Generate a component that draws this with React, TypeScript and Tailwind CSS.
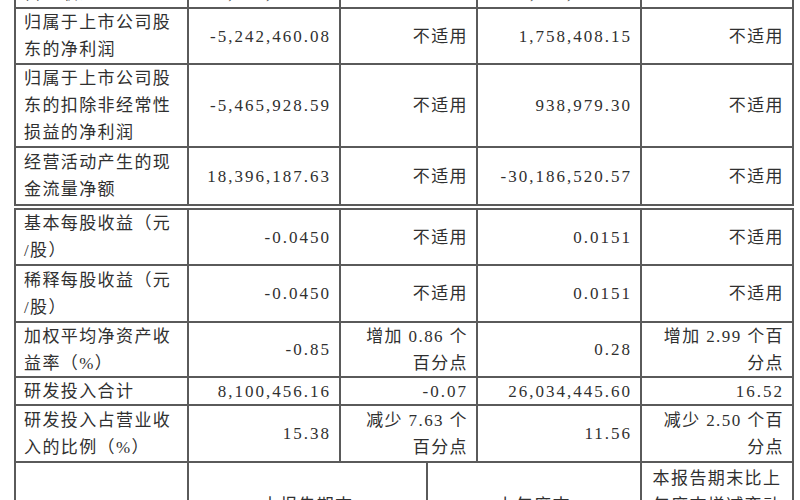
import React from "react";

const B = "border-[#5a5a5a]";

type Cell = string[];

function Row({
  h,
  cells,
  cols,
  align,
}: {
  h: string;
  cells: Cell[];
  cols: string;
  align?: ("l" | "r" | "c")[];
}) {
  return (
    <div className={`grid ${cols} ${h} border-b-2 ${B}`}>
      {cells.map((lines, i) => {
        const a = align ? align[i] : i === 0 ? "l" : "r";
        const cls =
          a === "l"
            ? "justify-start text-left pl-[8px]"
            : a === "c"
            ? "justify-center text-center"
            : "justify-end text-right pr-[8px]";
        return (
          <div
            key={i}
            className={`flex items-center overflow-hidden border-r-2 ${B} ${cls}`}
          >
            <div className="leading-[27px] whitespace-nowrap">
              {lines.map((l, j) => (
                <div
                  key={j}
                  className={/^[-\d.,]+$/.test(l) ? "tracking-[2px]" : "tracking-[1.4px]"}
                >
                  {l}
                </div>
              ))}
            </div>
          </div>
        );
      })}
    </div>
  );
}

const C5 = "grid-cols-[173px_152px_137px_164px_152px]";
const C4 = "grid-cols-[173px_239px_214px_152px]";

export default function App() {
  return (
    <div
      className="w-[800px] h-[500px] overflow-hidden bg-white text-[#303030] text-[17px]"
      style={{ fontFamily: '"Liberation Serif", "Noto Sans CJK SC", serif' }}
    >
      <div className="mt-[-23px]">
        <div className={`ml-[14px] w-[780px] border-l-2 border-t-2 ${B}`}>
          <Row
            h="h-[30px]"
            cols={C5}
            cells={[["营业收入"], ["52,668,765.27"], ["-76.61"], ["225,211,467.52"], ["-31.39"]]}
          />
          <Row
            h="h-[56px]"
            cols={C5}
            cells={[
              ["归属于上市公司股", "东的净利润"],
              ["-5,242,460.08"],
              ["不适用"],
              ["1,758,408.15"],
              ["不适用"],
            ]}
          />
          <Row
            h="h-[83px]"
            cols={C5}
            cells={[
              ["归属于上市公司股", "东的扣除非经常性", "损益的净利润"],
              ["-5,465,928.59"],
              ["不适用"],
              ["938,979.30"],
              ["不适用"],
            ]}
          />
          <Row
            h="h-[58px]"
            cols={C5}
            cells={[
              ["经营活动产生的现", "金流量净额"],
              ["18,396,187.63"],
              ["不适用"],
              ["-30,186,520.57"],
              ["不适用"],
            ]}
          />
        </div>
        <div className={`mt-[2px] ml-[14px] w-[780px] border-l-2 border-t-2 ${B}`}>
          <Row
            h="h-[56px]"
            cols={C5}
            cells={[
              ["基本每股收益（元", "/股）"],
              ["-0.0450"],
              ["不适用"],
              ["0.0151"],
              ["不适用"],
            ]}
          />
          <Row
            h="h-[57px]"
            cols={C5}
            cells={[
              ["稀释每股收益（元", "/股）"],
              ["-0.0450"],
              ["不适用"],
              ["0.0151"],
              ["不适用"],
            ]}
          />
          <Row
            h="h-[55px]"
            cols={C5}
            cells={[
              ["加权平均净资产收", "益率（%）"],
              ["-0.85"],
              ["增加 0.86 个", "百分点"],
              ["0.28"],
              ["增加 2.99 个百", "分点"],
            ]}
          />
          <Row
            h="h-[28px]"
            cols={C5}
            cells={[
              ["研发投入合计"],
              ["8,100,456.16"],
              ["-0.07"],
              ["26,034,445.60"],
              ["16.52"],
            ]}
          />
          <Row
            h="h-[57px]"
            cols={C5}
            cells={[
              ["研发投入占营业收", "入的比例（%）"],
              ["15.38"],
              ["减少 7.63 个", "百分点"],
              ["11.56"],
              ["减少 2.50 个百", "分点"],
            ]}
          />
          <Row
            h="h-[86px]"
            cols={C4}
            align={["l", "c", "c", "c"]}
            cells={[
              [""],
              ["本报告期末"],
              ["上年度末"],
              ["本报告期末比上", "年度末增减变动", "幅度（%）"],
            ]}
          />
        </div>
      </div>
    </div>
  );
}
